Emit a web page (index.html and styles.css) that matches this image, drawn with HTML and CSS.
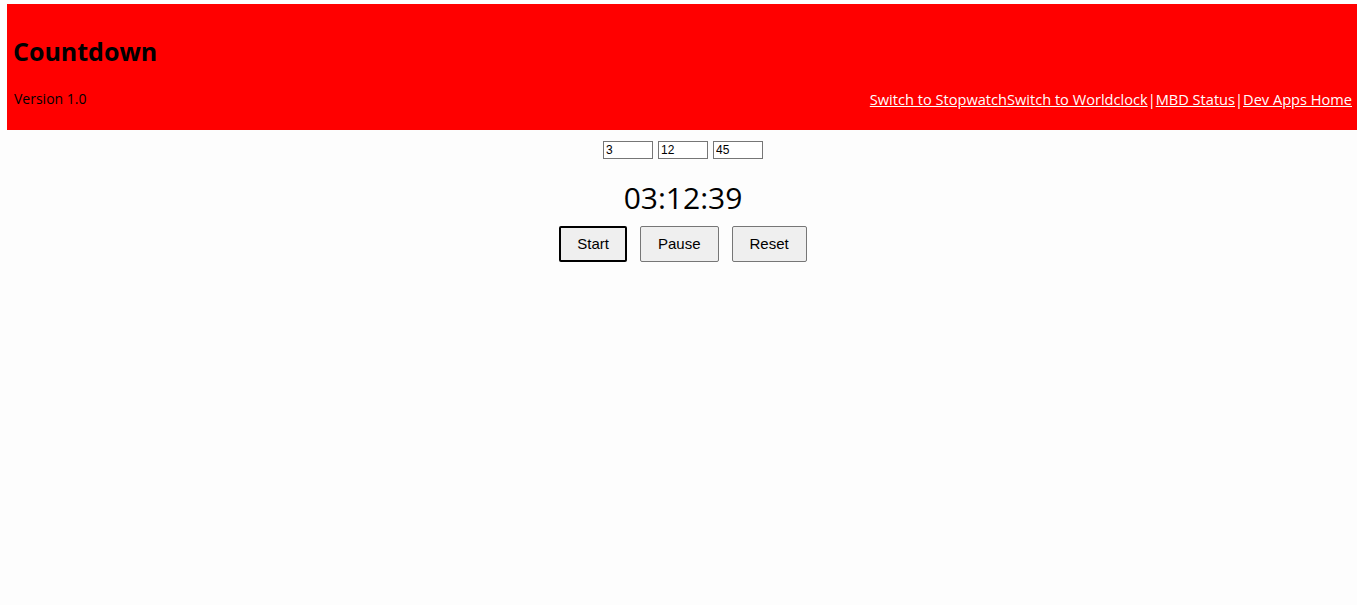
FILE: index.html
```html
<!DOCTYPE html>
<html>
<head>
<meta charset="utf-8">
<title>Countdown</title>
<link rel="stylesheet" href="styles.css">
</head>
<body>
<header class="top">
  <h1 class="title">Countdown</h1>
  <div class="meta">
    <span class="version">Version 1.0</span>
    <nav class="links"><a href="#">Switch to Stopwatch</a><a href="#">Switch to Worldclock</a>|<a href="#">MBD Status</a>|<a href="#">Dev Apps Home</a></nav>
  </div>
</header>
<main class="main">
  <div class="inputs">
    <input class="field" type="text" value="3">
    <input class="field" type="text" value="12">
    <input class="field" type="text" value="45">
  </div>
  <div class="timer">03:12:39</div>
  <div class="buttons">
    <button class="btn btn-focus">Start</button>
    <button class="btn">Pause</button>
    <button class="btn">Reset</button>
  </div>
</main>
</body>
</html>
```
FILE: styles.css
```css
html, body {
  background: #fdfdfd;
}
body {
  margin: 4px 0 0 7px;
  font-family: "Comic Sans MS", "Open Sans", sans-serif;
  color: #000;
}
.top {
  background: #ff0000;
  height: 126px;
  box-sizing: border-box;
  padding: 31px 5px 0 6px;
}
.title {
  margin: 0;
  font-size: 25px;
  line-height: 32px;
  font-weight: bold;
}
.meta {
  margin-top: 22px;
  display: flex;
  justify-content: space-between;
  align-items: center;
  line-height: 20px;
  font-size: 14px;
}
.version {
  padding-left: 1px;
}
.links {
  color: #fff;
  font-size: 14.6px;
}
.links a {
  color: #fff;
  text-decoration: underline;
}
.main {
  display: flex;
  flex-direction: column;
  align-items: center;
  padding-top: 11px;
  padding-left: 2px;
}
.inputs {
  display: flex;
  gap: 5px;
}
.field {
  width: 50px;
  height: 18px;
  box-sizing: border-box;
  margin: 0;
  padding: 1px 2px;
  border: 1px solid #767676;
  font-family: "Liberation Sans", Arial, sans-serif;
  font-size: 12px;
  background: #fff;
}
.timer {
  margin-top: 19px;
  font-size: 30px;
  line-height: 40px;
}
.buttons {
  margin-top: 8px;
  display: flex;
  gap: 13px;
}
.btn {
  height: 36px;
  padding: 0 17px 1px;
  margin: 0;
  background: #efefef;
  border: 1px solid #767676;
  border-radius: 2px;
  font-family: "Liberation Sans", Arial, sans-serif;
  font-size: 15px;
  color: #000;
}
.btn-focus {
  border: 2px solid #000;
  padding: 0 16px 1px;
}
```
